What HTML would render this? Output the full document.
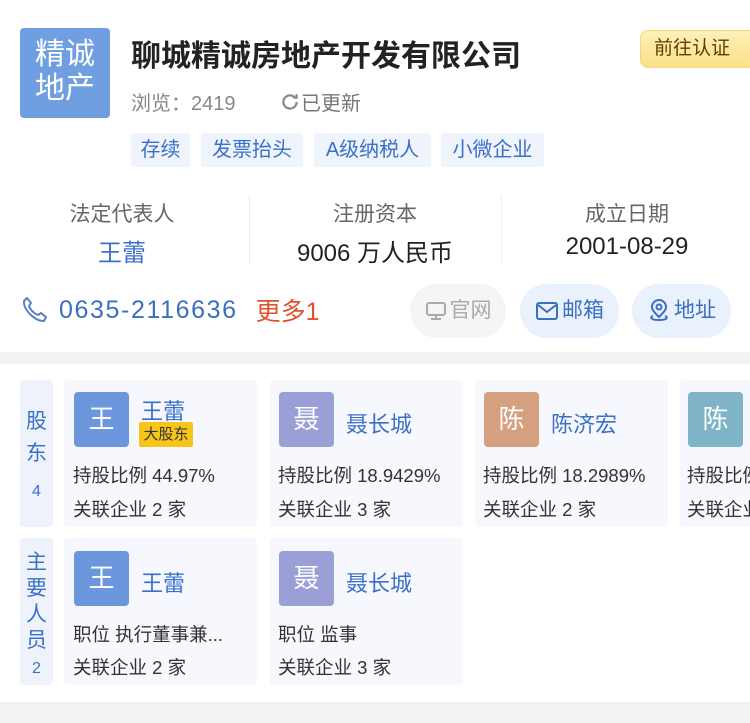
<!DOCTYPE html>
<html><head><meta charset="utf-8">
<style>
*{margin:0;padding:0;box-sizing:border-box}
body{width:750px;height:723px;background:#fff;font-family:"Liberation Sans","Noto Sans CJK SC",sans-serif;position:relative;overflow:hidden;color:#333}
.a{position:absolute;white-space:nowrap}
.logo{left:20px;top:28px;width:90px;height:90px;background:#6f9fe0;border-radius:4px;color:#fff;font-size:30px;line-height:34px;text-align:center;padding-top:10px}
.tag{top:133px;height:34px;background:#eef3fc;color:#3b70c8;font-size:20px;line-height:34px;text-align:center;border-radius:3px}
.lab{top:198px;color:#666;font-size:21px;width:250px;text-align:center}
.val{top:233px;color:#222;font-size:24px;width:250px;text-align:center}
.div{top:195px;width:1px;height:70px;background:#eee}
.btn{top:284px;height:54px;border-radius:27px;font-size:21px;line-height:54px;display:flex;align-items:center;justify-content:center;gap:3px}
.side{left:20px;width:33px;background:#eef3fb;border-radius:4px;color:#3b70c8;font-size:21px;text-align:center}
.card{width:193px;height:147px;background:#f6f8fd;border-radius:4px}
.av{width:55px;height:55px;border-radius:4px;color:#fff;font-size:26px;line-height:55px;text-align:center}
.nm{font-size:22px;color:#3b70c8}
.t{font-size:18.5px;color:#333}
</style></head><body>
<div class="a logo">精诚<br>地产</div>
<div class="a" style="left:131px;top:31px;font-size:30px;font-weight:bold;color:#222">聊城精诚房地产开发有限公司</div>
<div class="a" style="left:640px;top:30px;width:120px;height:38px;border-radius:8px;background:linear-gradient(#fff0b8,#fbe08a);border:1px solid #f5d978;color:#5a4000;font-size:19px;line-height:36px;padding-left:13px">前往认证</div>
<div class="a" style="left:131px;top:87px;font-size:20px;color:#888">浏览：2419</div>
<div class="a" style="left:279px;top:87px;font-size:20px;color:#777;display:flex;align-items:center"><svg width="22" height="22" viewBox="0 0 20 20" fill="none" stroke="#888" stroke-width="2"><path d="M16 10a6 6 0 1 1-2-4.5M16 3v3h-3"/></svg>已更新</div>
<div class="a tag" style="left:131px;width:59px">存续</div>
<div class="a tag" style="left:201px;width:102px">发票抬头</div>
<div class="a tag" style="left:314px;width:117px">A级纳税人</div>
<div class="a tag" style="left:441px;width:103px">小微企业</div>
<div class="a lab" style="left:-3px">法定代表人</div>
<div class="a lab" style="left:250px">注册资本</div>
<div class="a lab" style="left:502px">成立日期</div>
<div class="a val" style="left:-3px;color:#3b70c8">王蕾</div>
<div class="a val" style="left:250px">9006 万人民币</div>
<div class="a val" style="left:502px">2001-08-29</div>
<div class="a div" style="left:249px"></div>
<div class="a div" style="left:501px"></div>
<div class="a" style="left:20px;top:292px;height:36px;display:flex;align-items:center">
<svg width="30" height="30" viewBox="0 0 30 30" fill="none" stroke="#5a80c0" stroke-width="2"><path d="M7 3l4 5-2 3c1 3 4 7 9 9l3-2 5 4-2 4c-8 1-21-11-20-20z" stroke-linejoin="round"/></svg>
<span style="margin-left:9px;font-size:25px;color:#3b6fc0;letter-spacing:1.6px">0635-2116636</span>
<span style="margin-left:18px;font-size:25px;color:#e0522a">更多1</span></div>
<div class="a btn" style="left:410px;width:96px;background:#f5f5f5;color:#aaa"><svg width="22" height="22" viewBox="0 0 22 22" fill="none" stroke="#aaa" stroke-width="2"><rect x="2" y="3" width="18" height="12" rx="2"/><path d="M6 19h10M11 15v4"/></svg>官网</div>
<div class="a btn" style="left:520px;width:99px;background:#e9f1fc;color:#3b6fc0"><svg width="24" height="20" viewBox="0 0 24 20" fill="none" stroke="#3b6fc0" stroke-width="2"><rect x="2" y="2" width="20" height="16" rx="2"/><path d="M3 4l9 7 9-7"/></svg>邮箱</div>
<div class="a btn" style="left:632px;width:99px;background:#e9f1fc;color:#3b6fc0"><svg width="24" height="24" viewBox="0 0 24 24" fill="none" stroke="#3b6fc0" stroke-width="2"><path d="M12 18c-4-4-7-7-7-10a7 7 0 0 1 14 0c0 3-3 6-7 10z"/><circle cx="12" cy="8" r="2.5"/><path d="M6 17c-3 1-3 4 6 4s9-3 6-4"/></svg>地址</div>
<div class="a" style="left:0;top:352px;width:750px;height:12px;background:#f2f2f2"></div>
<div class="a side" style="top:380px;height:147px;padding-top:26px;line-height:32px">股<br>东<br><span style="font-size:16px;line-height:44px">4</span></div>
<div class="a card" style="left:64px;top:380px"></div>
<div class="a card" style="left:270px;top:380px"></div>
<div class="a card" style="left:475px;top:380px"></div>
<div class="a card" style="left:680px;top:380px"></div>
<div class="a av" style="left:74px;top:392px;background:#6d97dc">王</div>
<div class="a av" style="left:279px;top:392px;background:#9a9fd6">聂</div>
<div class="a av" style="left:484px;top:392px;background:#d4a080">陈</div>
<div class="a av" style="left:688px;top:392px;background:#7fb3c8">陈</div>
<div class="a nm" style="left:141px;top:394px">王蕾</div>
<div class="a" style="left:139px;top:422px;width:54px;height:25px;background:#f7c51a;color:#333;font-size:15px;line-height:25px;text-align:center;border-radius:2px">大股东</div>
<div class="a nm" style="left:346px;top:407px">聂长城</div>
<div class="a nm" style="left:551px;top:407px">陈济宏</div>
<div class="a t" style="left:73px;top:462px">持股比例 44.97%</div>
<div class="a t" style="left:278px;top:462px">持股比例 18.9429%</div>
<div class="a t" style="left:483px;top:462px">持股比例 18.2989%</div>
<div class="a t" style="left:687px;top:462px">持股比例</div>
<div class="a t" style="left:73px;top:496px">关联企业 2 家</div>
<div class="a t" style="left:278px;top:496px">关联企业 3 家</div>
<div class="a t" style="left:483px;top:496px">关联企业 2 家</div>
<div class="a t" style="left:687px;top:496px">关联企业</div>
<div class="a side" style="top:538px;height:147px;padding-top:12px;line-height:26px">主<br>要<br>人<br>员<br><span style="font-size:16px">2</span></div>
<div class="a card" style="left:64px;top:538px"></div>
<div class="a card" style="left:270px;top:538px"></div>
<div class="a av" style="left:74px;top:551px;background:#6d97dc">王</div>
<div class="a av" style="left:279px;top:551px;background:#9a9fd6">聂</div>
<div class="a nm" style="left:141px;top:566px">王蕾</div>
<div class="a nm" style="left:346px;top:566px">聂长城</div>
<div class="a t" style="left:73px;top:621px">职位 执行董事兼...</div>
<div class="a t" style="left:278px;top:621px">职位 监事</div>
<div class="a t" style="left:73px;top:654px">关联企业 2 家</div>
<div class="a t" style="left:278px;top:654px">关联企业 3 家</div>
<div class="a" style="left:0;top:702px;width:750px;height:21px;background:#f2f2f2"></div>
</body></html>
